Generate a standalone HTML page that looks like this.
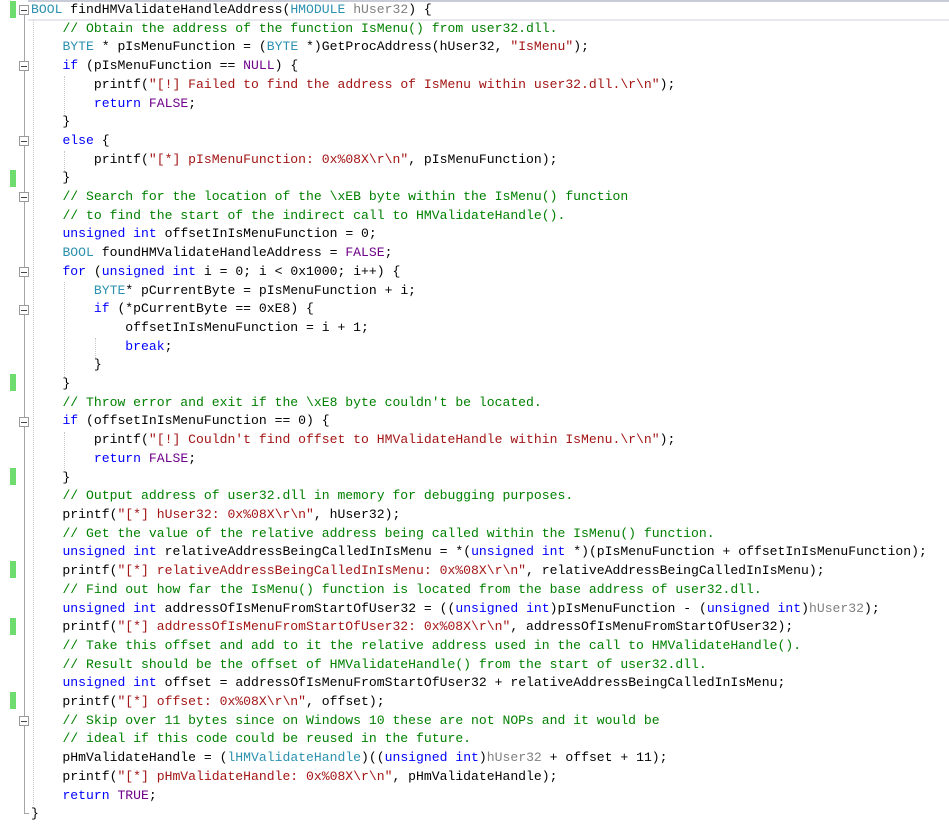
<!DOCTYPE html>
<html><head><meta charset="utf-8"><style>
html,body{margin:0;padding:0;background:#fff;width:949px;height:824px;overflow:hidden}
.code{position:absolute;left:31px;top:1px;font-family:"Liberation Mono",monospace;font-size:13.1px;line-height:18.7px;color:#000;white-space:pre;margin:0}
.k{color:#0000ff}.t{color:#2b91af}.c{color:#008000}.s{color:#a31515}.m{color:#6f008a}.p{color:#808080}
.bar{position:absolute;left:10px;width:6px;height:17px;background:#6fdc6f}
.fold{position:absolute;left:19px;width:8px;height:8px;border:1px solid #9a9a9a;background:#fff}
.fold:after{content:"";position:absolute;left:1px;top:3.5px;width:6px;height:1px;background:#444}
.vl{position:absolute;left:24px;width:1px;background:#a5a5a5}
.cur{position:absolute;left:28px;right:0;top:0;height:17px;border-top:2px solid #c8ccd9;border-bottom:2px solid #e8e8ee}
.g{position:absolute;width:0;border-left:1px dotted #c8c8c8}
</style></head><body>
<div class="cur"></div>
<div class="vl" style="top:14px;height:800px"></div>
<div style="position:absolute;left:24px;top:813px;width:5px;height:1px;background:#a5a5a5"></div>
<div class="g" style="left:33px;top:20px;height:785px"></div>
<div class="g" style="left:64px;top:76px;height:38px"></div>
<div class="g" style="left:64px;top:151px;height:20px"></div>
<div class="g" style="left:64px;top:282px;height:95px"></div>
<div class="g" style="left:95px;top:338px;height:20px"></div>
<div class="g" style="left:64px;top:432px;height:38px"></div>
<div class="bar" style="top:1px"></div>
<div class="bar" style="top:170px"></div>
<div class="bar" style="top:374px"></div>
<div class="bar" style="top:468px"></div>
<div class="bar" style="top:561px"></div>
<div class="bar" style="top:618px"></div>
<div class="bar" style="top:692px"></div>
<div class="fold" style="top:5px"></div>
<div class="fold" style="top:61px"></div>
<div class="fold" style="top:136px"></div>
<div class="fold" style="top:192px"></div>
<div class="fold" style="top:267px"></div>
<div class="fold" style="top:305px"></div>
<div class="fold" style="top:417px"></div>
<div class="fold" style="top:716px"></div>
<pre class="code"><span class="t">BOOL</span> findHMValidateHandleAddress(<span class="t">HMODULE</span> <span class="p">hUser32</span>) {
    <span class="c">// Obtain the address of the function IsMenu() from user32.dll.</span>
    <span class="t">BYTE</span> * pIsMenuFunction = (<span class="t">BYTE</span> *)GetProcAddress(hUser32, <span class="s">"IsMenu"</span>);
    <span class="k">if</span> (pIsMenuFunction == <span class="m">NULL</span>) {
        printf(<span class="s">"[!] Failed to find the address of IsMenu within user32.dll.\r\n"</span>);
        <span class="k">return</span> <span class="m">FALSE</span>;
    }
    <span class="k">else</span> {
        printf(<span class="s">"[*] pIsMenuFunction: 0x%08X\r\n"</span>, pIsMenuFunction);
    }
    <span class="c">// Search for the location of the \xEB byte within the IsMenu() function</span>
    <span class="c">// to find the start of the indirect call to HMValidateHandle().</span>
    <span class="k">unsigned</span> <span class="k">int</span> offsetInIsMenuFunction = 0;
    <span class="t">BOOL</span> foundHMValidateHandleAddress = <span class="m">FALSE</span>;
    <span class="k">for</span> (<span class="k">unsigned</span> <span class="k">int</span> i = 0; i &lt; 0x1000; i++) {
        <span class="t">BYTE</span>* pCurrentByte = pIsMenuFunction + i;
        <span class="k">if</span> (*pCurrentByte == 0xE8) {
            offsetInIsMenuFunction = i + 1;
            <span class="k">break</span>;
        }
    }
    <span class="c">// Throw error and exit if the \xE8 byte couldn't be located.</span>
    <span class="k">if</span> (offsetInIsMenuFunction == 0) {
        printf(<span class="s">"[!] Couldn't find offset to HMValidateHandle within IsMenu.\r\n"</span>);
        <span class="k">return</span> <span class="m">FALSE</span>;
    }
    <span class="c">// Output address of user32.dll in memory for debugging purposes.</span>
    printf(<span class="s">"[*] hUser32: 0x%08X\r\n"</span>, hUser32);
    <span class="c">// Get the value of the relative address being called within the IsMenu() function.</span>
    <span class="k">unsigned</span> <span class="k">int</span> relativeAddressBeingCalledInIsMenu = *(<span class="k">unsigned</span> <span class="k">int</span> *)(pIsMenuFunction + offsetInIsMenuFunction);
    printf(<span class="s">"[*] relativeAddressBeingCalledInIsMenu: 0x%08X\r\n"</span>, relativeAddressBeingCalledInIsMenu);
    <span class="c">// Find out how far the IsMenu() function is located from the base address of user32.dll.</span>
    <span class="k">unsigned</span> <span class="k">int</span> addressOfIsMenuFromStartOfUser32 = ((<span class="k">unsigned</span> <span class="k">int</span>)pIsMenuFunction - (<span class="k">unsigned</span> <span class="k">int</span>)<span class="p">hUser32</span>);
    printf(<span class="s">"[*] addressOfIsMenuFromStartOfUser32: 0x%08X\r\n"</span>, addressOfIsMenuFromStartOfUser32);
    <span class="c">// Take this offset and add to it the relative address used in the call to HMValidateHandle().</span>
    <span class="c">// Result should be the offset of HMValidateHandle() from the start of user32.dll.</span>
    <span class="k">unsigned</span> <span class="k">int</span> offset = addressOfIsMenuFromStartOfUser32 + relativeAddressBeingCalledInIsMenu;
    printf(<span class="s">"[*] offset: 0x%08X\r\n"</span>, offset);
    <span class="c">// Skip over 11 bytes since on Windows 10 these are not NOPs and it would be</span>
    <span class="c">// ideal if this code could be reused in the future.</span>
    pHmValidateHandle = (<span class="t">lHMValidateHandle</span>)((<span class="k">unsigned</span> <span class="k">int</span>)<span class="p">hUser32</span> + offset + 11);
    printf(<span class="s">"[*] pHmValidateHandle: 0x%08X\r\n"</span>, pHmValidateHandle);
    <span class="k">return</span> <span class="m">TRUE</span>;
}</pre>
</body></html>
